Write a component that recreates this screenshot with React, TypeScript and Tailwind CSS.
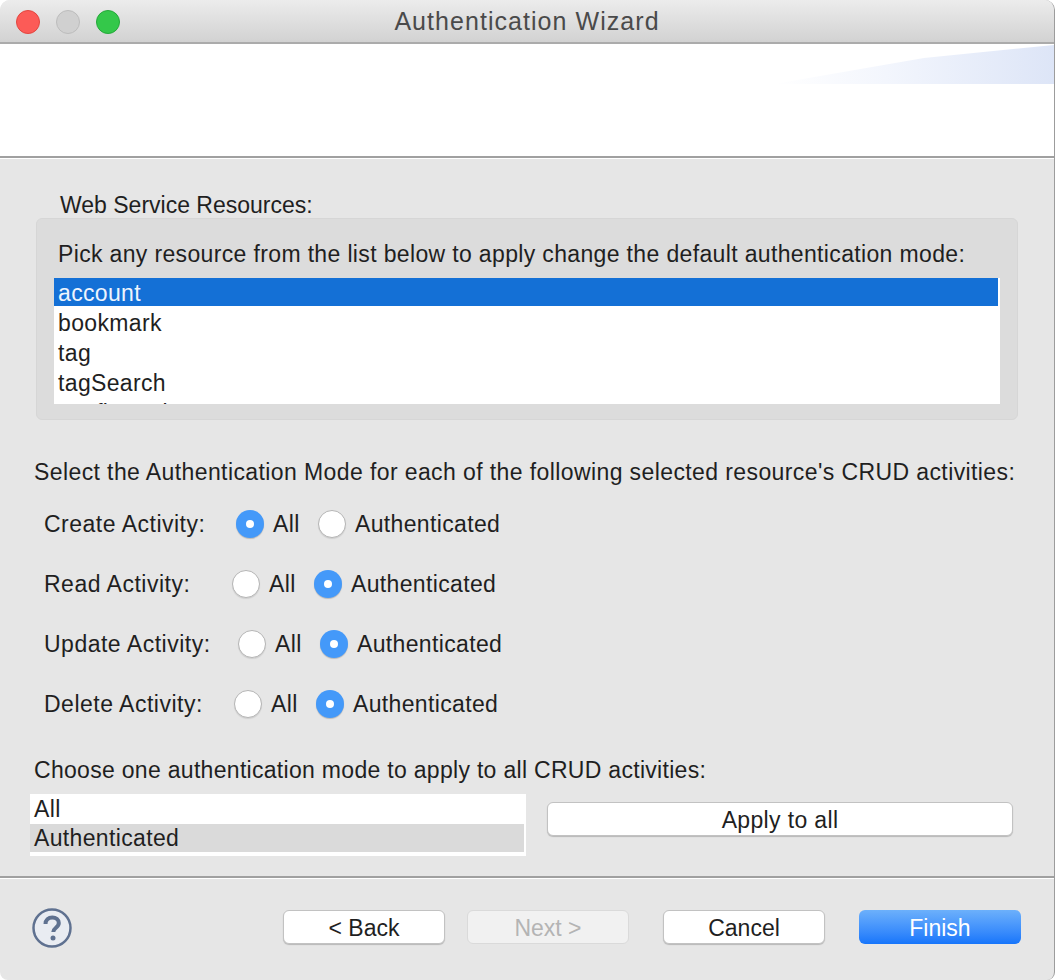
import React from "react";

const font = { fontFamily: '"Liberation Sans", Arial, sans-serif' };

function Radio({ checked, label }: { checked: boolean; label: string }) {
  return (
    <div className="flex items-center gap-[9px]">
      {checked ? (
        <span className="flex h-7 w-7 items-center justify-center rounded-full bg-[#4499f9] shadow-[0_1px_1px_rgba(0,0,0,0.2)]">
          <span className="h-2 w-2 rounded-full bg-white" />
        </span>
      ) : (
        <span className="h-7 w-7 rounded-full border border-[#b5b5b5] bg-white shadow-[0_1px_1px_rgba(0,0,0,0.1)]" />
      )}
      <span className="text-[#1f1f1f]">{label}</span>
    </div>
  );
}

function ActivityRow({ name, gap, auth }: { name: string; gap: string; auth: boolean }) {
  return (
    <div className="flex h-[60px] items-center pl-[44px]">
      <span className={`tracking-[0.5px] ${gap}`}>{name}</span>
      <div className="w-[82px]">
        <Radio checked={!auth} label="All" />
      </div>
      <Radio checked={auth} label="Authenticated" />
    </div>
  );
}

function WizardButton({ label, className }: { label: string; className: string }) {
  return (
    <div className={`flex h-[34px] items-center justify-center rounded-[6px] pt-px ${className}`}>{label}</div>
  );
}

export default function App() {
  return (
    <div className="h-[980px] w-[1056px] overflow-hidden bg-white" style={font}>
      <div className="flex h-full w-[1055px] flex-col overflow-hidden rounded-t-[10px] rounded-b-[8px] border-r border-[#9c9c9c] bg-[#e6e6e6] text-[23px] leading-[30px] tracking-[0.35px] text-[#1f1f1f]">
        {/* title bar */}
        <div className="relative flex h-11 shrink-0 items-center justify-center border-b-2 border-[#ababab] bg-gradient-to-b from-[#ececec] to-[#d2d2d2] text-[25px] tracking-[1.05px] text-[#4a4a4a]">
          <div className="absolute left-4 top-[10px] flex gap-4">
            <span className="h-6 w-6 rounded-full border border-[#e2463f] bg-[#fc5b57]" />
            <span className="h-6 w-6 rounded-full border border-[#bcbcbc] bg-[#d0d0d0]" />
            <span className="h-6 w-6 rounded-full border border-[#25a83a] bg-[#34c84a]" />
          </div>
          Authentication Wizard
        </div>

        {/* banner */}
        <div className="relative h-[112px] shrink-0 bg-white">
          <svg className="absolute right-0 top-0" width="280" height="40">
            <defs>
              <linearGradient id="banner" x1="0" x2="1" y1="0" y2="0">
                <stop offset="0" stopColor="#ffffff" />
                <stop offset="0.4" stopColor="#f3f6fd" />
                <stop offset="1" stopColor="#dde5f7" />
              </linearGradient>
            </defs>
            <polygon points="0,40 150,14 280,1 280,40" fill="url(#banner)" />
          </svg>
        </div>
        <div className="h-[3px] shrink-0 border-t-2 border-[#a0a0a0] bg-white" />

        {/* resources */}
        <div className="pl-[60px] pt-[31px] tracking-normal">Web Service Resources:</div>
        <div className="mx-9 -mt-[2px] h-[202px] w-[982px] rounded-[6px] border border-[#d6d6d6] bg-[#dcdcdc] px-[17px] pt-[20px]">
          <div className="pl-[4px]">Pick any resource from the list below to apply change the default authentication mode:</div>
          <div className="mt-[9px] h-[126px] w-[946px] overflow-hidden bg-white">
            <div className="h-[28px] w-[944px] bg-[#1470d6] pl-[4px] text-[#eef4fd]">account</div>
            <div className="mt-[2px] pl-[4px]">bookmark</div>
            <div className="pl-[4px]">tag</div>
            <div className="pl-[4px]">tagSearch</div>
            <div className="pl-[4px]">configuration</div>
          </div>
        </div>

        {/* crud */}
        <div className="pl-[34px] pt-[37px] tracking-[0.4px]">Select the Authentication Mode for each of the following selected resource's CRUD activities:</div>
        <div className="mt-[7px]">
          <ActivityRow name="Create Activity:" gap="w-[192px]" auth={false} />
          <ActivityRow name="Read Activity:" gap="w-[188px]" auth={true} />
          <ActivityRow name="Update Activity:" gap="w-[194px]" auth={true} />
          <ActivityRow name="Delete Activity:" gap="w-[190px]" auth={true} />
        </div>

        {/* apply all */}
        <div className="pl-[34px] pt-[21px] tracking-[0.3px]">Choose one authentication mode to apply to all CRUD activities:</div>
        <div className="mt-[9px] flex items-start pl-[30px]">
          <div className="h-[62px] w-[496px] bg-white pr-[2px]">
            <div className="pl-1">All</div>
            <div className="bg-[#dadada] pl-1 leading-[28px]">Authenticated</div>
          </div>
          <WizardButton
            label="Apply to all"
            className="ml-[21px] mt-[8px] w-[466px] border border-[#c2c2c2] bg-white shadow-[0_1px_1px_rgba(0,0,0,0.2)]"
          />
        </div>

        {/* footer */}
        <div className="mt-[20px] h-[3px] shrink-0 border-t-2 border-[#a0a0a0] bg-white" />
        <div className="flex items-start pl-[32px] pt-[29px] tracking-normal">
          <svg width="40" height="40" viewBox="0 0 40 40">
            <circle cx="20" cy="20" r="18.500" fill="#e9ecf2" stroke="#5f7190" strokeWidth="2.500" />
            <path d="M13.500 16c0-4 3-6.500 6.800-6.500 3.800 0 6.500 2.300 6.500 5.500 0 4.800-5.500 4.700-5.500 9" fill="none" stroke="#5f7190" strokeWidth="4" />
            <circle cx="21" cy="30" r="2.500" fill="#5f7190" />
          </svg>
          <WizardButton label="< Back" className="ml-[211px] mt-[2px] w-[162px] border border-[#c2c2c2] bg-white shadow-[0_1px_1px_rgba(0,0,0,0.2)]" />
          <WizardButton label="Next >" className="ml-[22px] mt-[2px] w-[162px] border border-[#dadada] bg-[#f1f1f1] text-[#b4b4b4]" />
          <WizardButton label="Cancel" className="ml-[34px] mt-[2px] w-[162px] border border-[#c2c2c2] bg-white shadow-[0_1px_1px_rgba(0,0,0,0.2)]" />
          <WizardButton label="Finish" className="ml-[34px] mt-[2px] w-[162px] bg-gradient-to-b from-[#6cb0fb] to-[#1575fb] text-white" />
        </div>
      </div>
    </div>
  );
}
